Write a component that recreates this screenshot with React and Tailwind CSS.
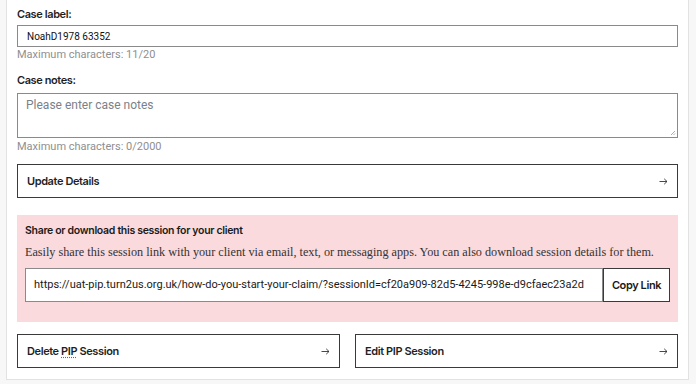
import React from "react";

const sans = { fontFamily: "Roboto, 'Liberation Sans', sans-serif" };
const inter = { fontFamily: "Inter, 'Liberation Sans', sans-serif" };

function Arrow() {
  return (
    <svg width="9" height="7" viewBox="0 0 9 7" fill="none">
      <path d="M0.5 3.5H8M5.2 0.8L8 3.5L5.2 6.2" stroke="#333" strokeWidth="0.9" />
    </svg>
  );
}

function ArrowButton({ children, className = "" }) {
  return (
    <button
      type="button"
      style={inter}
      className={`flex h-[34px] items-center justify-between border-[1.5px] border-[#3a3a3a] bg-white pl-[9px] pr-[9px] text-left text-[11px] font-semibold tracking-[-0.4px] text-[#1f1f1f] ${className}`}
    >
      <span>{children}</span>
      <Arrow />
    </button>
  );
}

export default function App() {
  return (
    <div
      className="h-[384px] w-[696px] overflow-hidden bg-[#f7f7f7] pl-[6px] pr-[7px]"
      style={sans}
    >
      <div className="h-[380px] border-x border-b border-[#e2e2e2] bg-white px-[10px] pt-[5px]">
        <label style={inter} className="block text-[11px] font-semibold leading-[18px] tracking-[-0.4px] text-[#1f1f1f]">
          Case label:
        </label>
        <div className="mt-[2px] flex h-[22px] items-center border border-[#8a8a8a] px-[9px] text-[10px] text-[#111]">
          NoahD1978 63352
        </div>
        <div className="mt-[1px] text-[11px] leading-[14px] text-[#8f8f8f]">
          Maximum characters: 11/20
        </div>
        <label style={inter} className="mt-[9px] block text-[11px] font-semibold leading-[18px] tracking-[-0.4px] text-[#1f1f1f]">
          Case notes:
        </label>
        <div className="relative mt-[4px] h-[45px] border border-[#8a8a8a] px-[8px] pt-[3px] text-[12px] leading-[16px] text-[#7a8189]">
          Please enter case notes
          <svg
            className="absolute bottom-[1px] right-[1px]"
            width="6"
            height="6"
            viewBox="0 0 6 6"
          >
            <path d="M5 1L1 5M5 3.5L3.5 5" stroke="#999" strokeWidth="0.8" />
          </svg>
        </div>
        <div className="mt-[2px] text-[11px] leading-[14px] text-[#8f8f8f]">
          Maximum characters: 0/2000
        </div>
        <ArrowButton className="mt-[10px] w-full">Update Details</ArrowButton>

        <div className="mt-[17px] h-[107px] bg-[#fbdadd] pl-[8px] pr-[8px] pt-[9px]">
          <div style={inter} className="text-[10.5px] font-semibold leading-[14px] tracking-[-0.3px] text-[#1a1a1a]">
            Share or download this session for your client
          </div>
          <div
            className="mt-[6px] whitespace-nowrap text-[12.2px] leading-[16px] text-[#333]"
            style={{ fontFamily: "'Liberation Serif', serif" }}
          >
            Easily share this session link with your client via email, text, or messaging apps. You can also download session details for them.
          </div>
          <div className="mt-[8px] flex h-[34px]">
            <div className="flex flex-1 items-center whitespace-nowrap border border-[#8a8a8a] bg-white pl-[8px] text-[11px] text-[#1a1a1a]">
              https://uat-pip.turn2us.org.uk/how-do-you-start-your-claim/?sessionId=cf20a909-82d5-4245-998e-d9cfaec23a2d
            </div>
            <button
              type="button"
              style={inter}
              className="flex w-[67px] items-center justify-center border-[1.5px] border-[#3a3a3a] bg-white text-[11px] font-semibold tracking-[-0.4px] text-[#1a1a1a]"
            >
              Copy Link
            </button>
          </div>
        </div>

        <div className="mt-[12px] flex gap-[15px]">
          <ArrowButton className="flex-1">
            Delete{" "}
            <abbr className="underline decoration-dotted decoration-[#666] underline-offset-2" title="Personal Independence Payment">
              PIP
            </abbr>{" "}
            Session
          </ArrowButton>
          <ArrowButton className="flex-1">Edit PIP Session</ArrowButton>
        </div>
      </div>
    </div>
  );
}
